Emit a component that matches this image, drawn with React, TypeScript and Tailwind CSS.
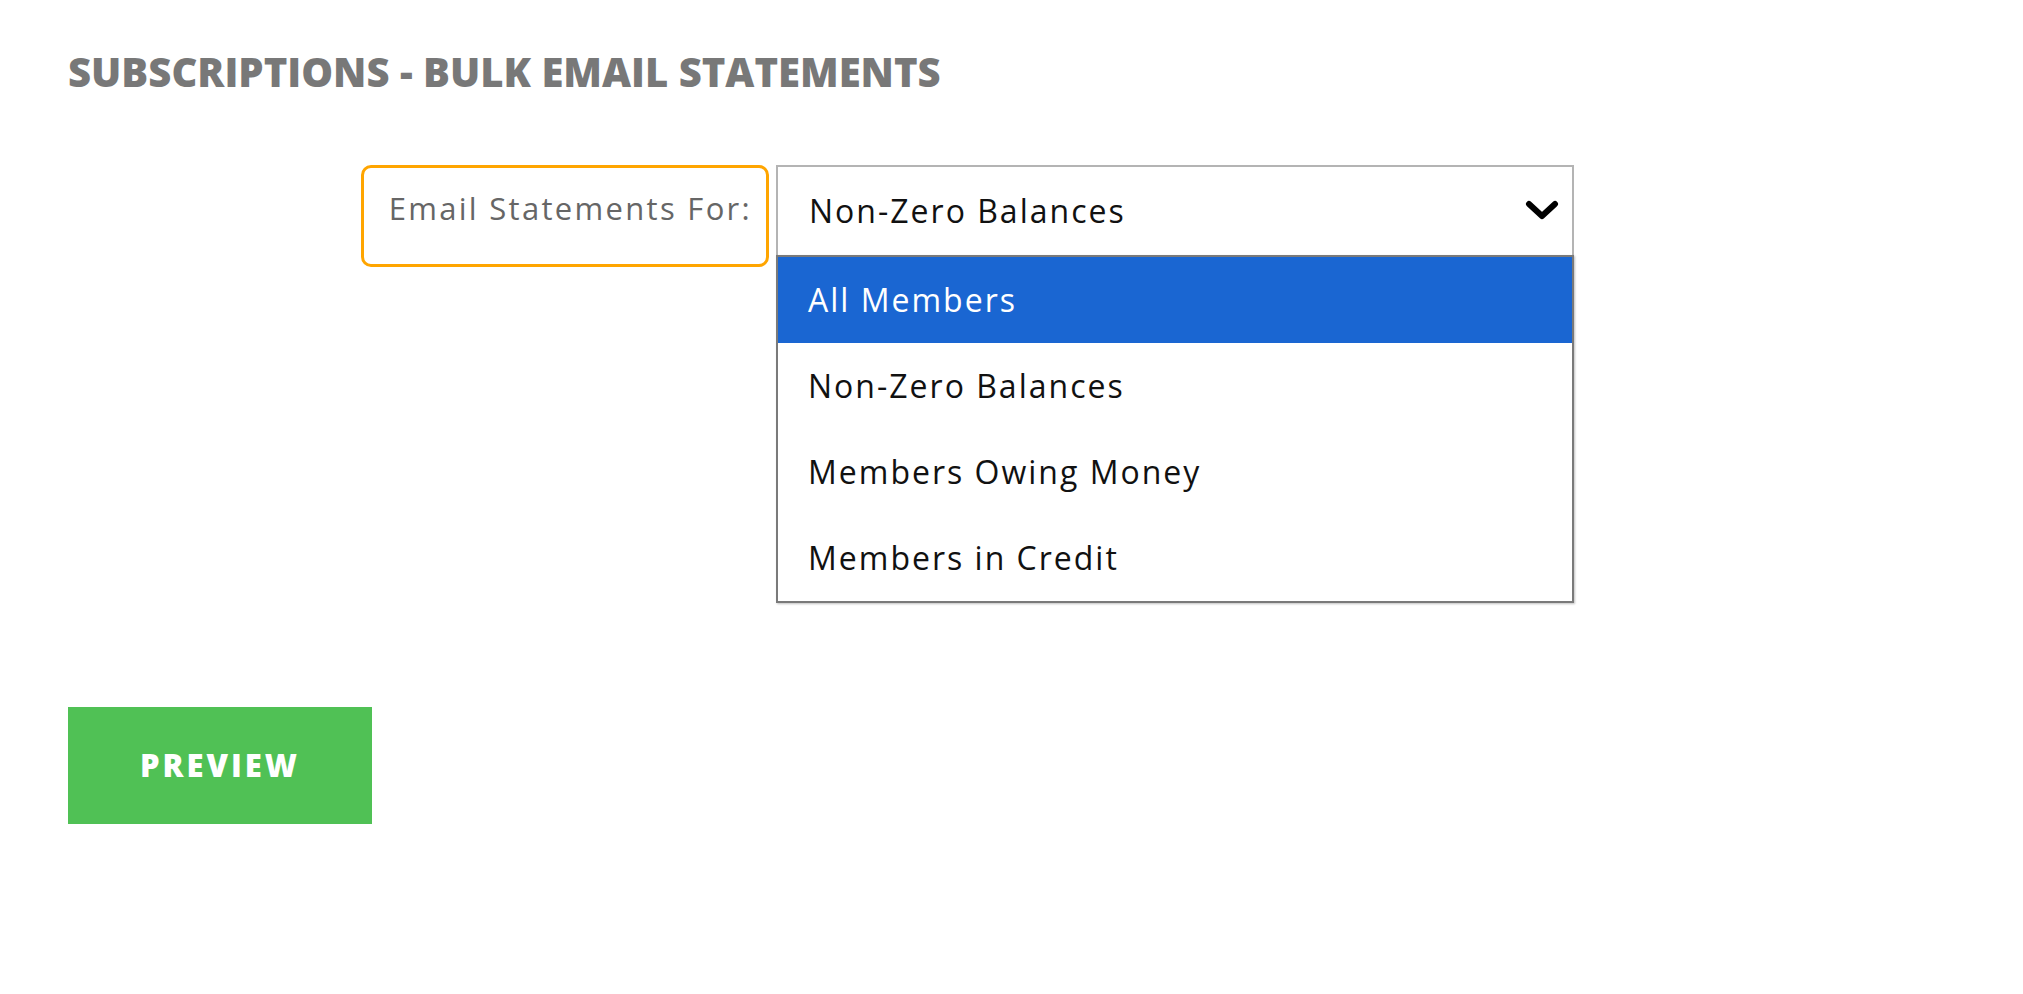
import React from "react";

const options = ["All Members", "Non-Zero Balances", "Members Owing Money", "Members in Credit"];

export default function App() {
  return (
    <div
      className="min-h-screen w-full bg-white pl-[68px] pt-[50px]"
      style={{ fontFamily: '"Open Sans", "Noto Sans", sans-serif' }}
    >
      <h1 className="text-[40px] font-extrabold leading-[44px] tracking-[0px] text-[#787878]">
        SUBSCRIPTIONS - BULK EMAIL STATEMENTS
      </h1>

      <div className="ml-[293px] mt-[71px] flex items-start gap-[7px]">
        <div className="flex h-[102px] w-[408px] items-start justify-end rounded-[10px] border-[3px] border-[#ffa500] pr-[14px] pt-[21px] text-[31px] leading-[38px] tracking-[2.3px] text-[#666666]">
          Email Statements For:
        </div>

        <div className="relative w-[798px]">
          <div className="flex h-[90px] items-center justify-between border-2 border-b-0 border-[#b4b4b4] pl-[31px] pr-[12px] text-[32px] tracking-[2px] text-[#111111]">
            <span>Non-Zero Balances</span>
            <svg width="34" height="22" viewBox="0 0 34 22" className="mr-[1px]">
              <polyline
                points="4,4 17,16 30,4"
                fill="none"
                stroke="#000"
                strokeWidth="6"
                strokeLinecap="round"
                strokeLinejoin="round"
              />
            </svg>
          </div>
          <ul className="absolute left-0 right-0 top-full border-2 border-[#7a7a7a] bg-white shadow-[1px_1px_2px_rgba(0,0,0,0.25)]">
            {options.map((o, i) => (
              <li
                key={o}
                className={
                  i === 0
                    ? "flex h-[86px] items-center bg-[#1a66d2] pl-[30px] text-[32px] tracking-[2px] text-white"
                    : "flex h-[86px] items-center pl-[30px] text-[32px] tracking-[2px] text-[#111111]"
                }
              >
                {o}
              </li>
            ))}
          </ul>
        </div>
      </div>

      <button className="mt-[440px] flex h-[117px] w-[304px] items-center justify-center bg-[#50c155] text-[31px] font-extrabold tracking-[3px] text-white">
        PREVIEW
      </button>
    </div>
  );
}
